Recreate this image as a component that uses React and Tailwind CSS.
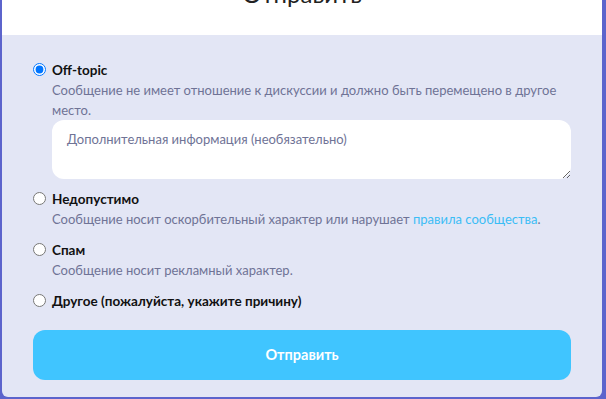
import React from 'react'

const FONT = { fontFamily: 'Lato, "Noto Sans", sans-serif' }

const OPTIONS = [
  {
    id: 'offtopic',
    title: 'Off-topic',
    desc: 'Сообщение не имеет отношение к дискуссии и должно быть перемещено в другое место.',
    checked: true,
    extra: true,
  },
  {
    id: 'bad',
    title: 'Недопустимо',
    desc: (
      <>
        Сообщение носит оскорбительный характер или нарушает{' '}
        <a className="text-[#3bbdf5]">правила сообщества</a>.
      </>
    ),
  },
  { id: 'spam', title: 'Спам', desc: 'Сообщение носит рекламный характер.' },
  { id: 'other', title: 'Другое (пожалуйста, укажите причину)' },
]

function Option({ opt }) {
  return (
    <div className="flex gap-[6px]">
      <input
        type="radio"
        name="reason"
        defaultChecked={opt.checked}
        className="mt-[3px] h-[13px] w-[13px] shrink-0 accent-[#0075ff]"
      />
      <div className="flex-1">
        <div className="text-[13.5px] font-bold leading-[20px] text-[#111]">{opt.title}</div>
        {opt.desc && (
          <div className="text-[13px] leading-[20px] text-[#6f7396]">{opt.desc}</div>
        )}
        {opt.extra && (
          <textarea
            placeholder="Дополнительная информация (необязательно)"
            className="-mb-[1px] block h-[59px] w-full rounded-[12px] bg-white px-[15px] py-[9px] text-[13px] leading-[20px] text-[#333] placeholder:text-[#6f7396] outline-none"
          />
        )}
      </div>
    </div>
  )
}

export default function App() {
  return (
    <div className="h-[399px] w-[606px] overflow-hidden bg-[#5c64cc] pl-[2px]" style={FONT}>
      <div className="w-[600px]">
        <div className="flex h-[35px] justify-center overflow-hidden bg-white">
          <h2 className="-mt-[22px] text-[24px] font-normal leading-[32px] text-[#222]">Отправить</h2>
        </div>
        <div className="flex h-[362px] flex-col rounded-b-[6px] bg-[#e3e6f5] px-[31px] pt-[25px]">
          <div className="flex flex-col gap-[11px]">
            {OPTIONS.map((o) => (
              <Option key={o.id} opt={o} />
            ))}
          </div>
          <button className="mt-[19px] h-[50px] w-full rounded-[12px] bg-[#40c5ff] text-[14.5px] font-bold text-white">
            Отправить
          </button>
        </div>
      </div>
    </div>
  )
}
